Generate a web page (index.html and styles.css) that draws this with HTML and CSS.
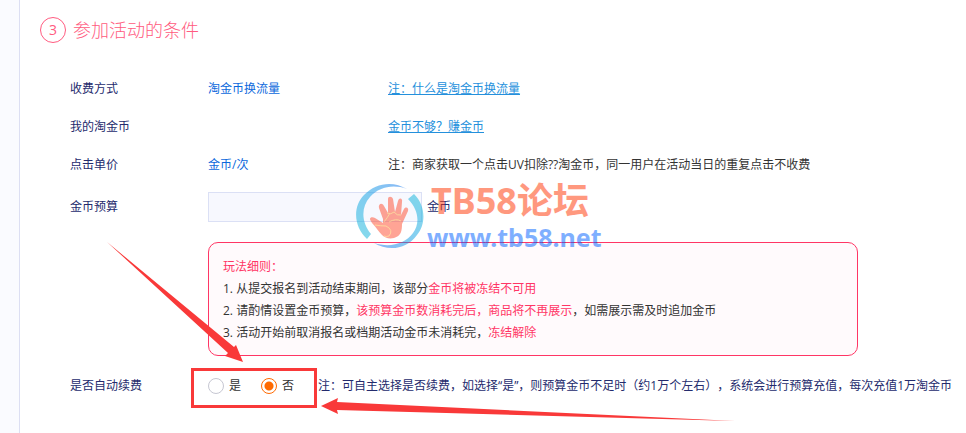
FILE: index.html
```
<!DOCTYPE html>
<html lang="zh-CN">
<head>
    <meta charset="UTF-8">
    <meta name="viewport" content="width=device-width, initial-scale=1.0">
    <title>参加活动的条件</title>
    <link rel="stylesheet" href="styles.css">
</head>
<body>
<div class="page">
    <div class="side"></div>
    <form class="content">
        <h2><span class="step">3</span>参加活动的条件</h2>

        <div class="row">
            <span class="label">收费方式</span>
            <span class="value">淘金币换流量</span>
            <a href="#">注：什么是淘金币换流量</a>
        </div>
        <div class="row">
            <span class="label">我的淘金币</span>
            <span class="value"></span>
            <a href="#">金币不够？赚金币</a>
        </div>
        <div class="row">
            <span class="label">点击单价</span>
            <span class="value">金币/次</span>
            <span class="note">注：商家获取一个点击UV扣除??淘金币，同一用户在活动当日的重复点击不收费</span>
        </div>
        <div class="row budget">
            <label class="label" for="budget">金币预算</label>
            <input type="text" id="budget" name="budget">
            <span class="unit">金币</span>
        </div>

        <div class="rules">
            <p class="red">玩法细则：</p>
            <p>1. 从提交报名到活动结束期间，该部分<span class="red">金币将被冻结不可用</span></p>
            <p>2. 请酌情设置金币预算，<span class="red">该预算金币数消耗完后，商品将不再展示</span>，如需展示需及时追加金币</p>
            <p>3. 活动开始前取消报名或档期活动金币未消耗完，<span class="red">冻结解除</span></p>
        </div>

        <div class="row renew">
            <span class="label">是否自动续费</span>
            <div class="choices">
                <label><input type="radio" name="renew" value="1">是</label>
                <label><input type="radio" name="renew" value="0" checked>否</label>
            </div>
            <span class="tip">注：可自主选择是否续费，如选择“是”，则预算金币不足时（约1万个左右），系统会进行预算充值，每次充值1万淘金币</span>
        </div>
    </form>

    <!-- watermark -->
    <div class="watermark">
        <svg width="68" height="68" viewBox="0 0 68 68">
            <defs>
                <linearGradient id="ring" x1="0" y1="1" x2="1" y2="0">
                    <stop offset="0" stop-color="#0bb8d8"/>
                    <stop offset="0.5" stop-color="#0ba0e4"/>
                    <stop offset="1" stop-color="#1470ee"/>
                </linearGradient>
                <linearGradient id="ring2" x1="1" y1="0" x2="0" y2="1">
                    <stop offset="0" stop-color="#0bb8d8"/>
                    <stop offset="0.5" stop-color="#0ba0e4"/>
                    <stop offset="1" stop-color="#1470ee"/>
                </linearGradient>
            </defs>
            <path d="M11 57C-3 44-3 24 8 13C20 0 38-1 51 7C37 2 23 5 14 15C5 25 5 40 15 52Z" fill="url(#ring)"/>
            <path d="M58 12C70 24 70 42 61 53C51 67 33 70 18 61C34 66 49 62 57 51C64 42 63 28 52 17Z" fill="url(#ring2)"/>
            <path d="M14 37C14 35 17 35 19 36L27 41L27 37L23 26C22 22 26 20 28 24L32 31L32 17C32 14 36 14 37 17L39 30L42 19C43 15 47 16 46 20L45 33L48 27C50 24 53 26 52 29L46 42C46 49 45 54 38 56C33 57 29 56 26 53C22 49 20 45 16 41C15 39 14 38 14 37Z" fill="#ff4b2d"/>
            <path d="M19 43Q25 44 30 44Q38 48 33 54Q30 55 28 54M28 40Q32 35 34 31M33 40Q40 36 45 39M31 31Q35 33 38 30M38 30Q41 34 45 33" fill="none" stroke="#ffae3c"/>
        </svg>
        <div>
            <div class="mark-name">TB58论坛</div>
            <div class="mark-url">www.tb58.net</div>
        </div>
    </div>

    <!-- red box and arrows pointing at the renew option -->
    <div class="mark-box"></div>
    <svg class="arrows" width="740" height="433" viewBox="0 0 740 433">
        <path d="M107 242L234 347L236 345L243 362L225 356L228 353Z"/>
        <path d="M321 406L338 398L337 402L735 421L337 410L338 414Z"/>
    </svg>
</div>
</body>
</html>
```
FILE: styles.css
```
* {
    box-sizing: border-box;
}
body {
    margin: 0;
    font-family: "Open Sans", "Noto Sans CJK SC", sans-serif;
    font-size: 12px;
    line-height: 22px;
    text-spacing-trim: space-all;
    color: #333;
    background-color: #fff;
}
.page {
    position: relative;
    display: flex;
    min-height: 100vh;
    overflow: hidden;
}
.side {
    flex: none;
    width: 20px;
    background-color: #fafbff;
    border-right: 1px solid #dcdff3;
}
.content {
    flex: 1;
    padding: 16px 0 0 20px;
}
h2 {
    display: flex;
    align-items: center;
    gap: 7px;
    height: 28px;
    margin: 0 0 26px;
    font-size: 18px;
    font-weight: 300;
    color: #ff5b80;
}
.step {
    width: 26px;
    height: 26px;
    border: 1px solid #ff5b80;
    border-radius: 50%;
    font-size: 14px;
    font-weight: 400;
    line-height: 24px;
    text-align: center;
}
.row {
    display: flex;
    align-items: center;
    height: 38px;
    padding-left: 30px;
    white-space: nowrap;
}
.label {
    width: 138px;
    color: #242b6d;
}
.value {
    width: 180px;
    color: #0b68dc;
}
.row a {
    color: #2490dc;
    text-decoration: underline;
}
.budget {
    height: 46px;
}
.budget input {
    width: 214px;
    height: 30px;
    padding: 0 8px;
    border: 1px solid #dbe0f5;
    background-color: #f7f8fe;
}
.unit {
    margin-left: 5px;
    color: #242b6d;
}
.rules {
    max-width: 650px;
    margin: 12px 0 0 168px;
    padding: 13px 14px 11px;
    border: 1px solid #ff3665;
    border-radius: 10px;
    background-color: #fffafc;
}
.rules p {
    margin: 0;
}
.red {
    color: #ff3665;
}
.renew {
    height: 60px;
}
.choices {
    display: flex;
    gap: 20px;
    width: 110px;
}
.choices label {
    display: flex;
    align-items: center;
    gap: 5px;
}
.choices input {
    appearance: none;
    width: 16px;
    height: 16px;
    margin: 0;
    border: 1px solid #c6c7d2;
    border-radius: 50%;
    background-color: #fff;
}
.choices input:checked {
    border-color: #ff6a00;
    background: radial-gradient(circle, #ff6a00 4px, #fff 5px);
}
.tip {
    color: #242b6d;
}
.watermark {
    position: absolute;
    top: 182px;
    left: 356px;
    display: flex;
    gap: 3px;
    opacity: 0.5;
    font-family: "Noto Sans", "Noto Sans CJK SC", sans-serif;
    font-weight: bold;
    white-space: nowrap;
    pointer-events: none;
}
.mark-name {
    padding-left: 4px;
    font-size: 36px;
    line-height: 38px;
    color: #ff3300;
}
.mark-url {
    font-size: 25px;
    line-height: 34px;
    color: #0061ff;
}
.mark-box {
    position: absolute;
    top: 368px;
    left: 191px;
    width: 126px;
    height: 40px;
    border: 3px solid #f93939;
    pointer-events: none;
}
.arrows {
    position: absolute;
    top: 0;
    left: 0;
    fill: #f93939;
    pointer-events: none;
}
```
